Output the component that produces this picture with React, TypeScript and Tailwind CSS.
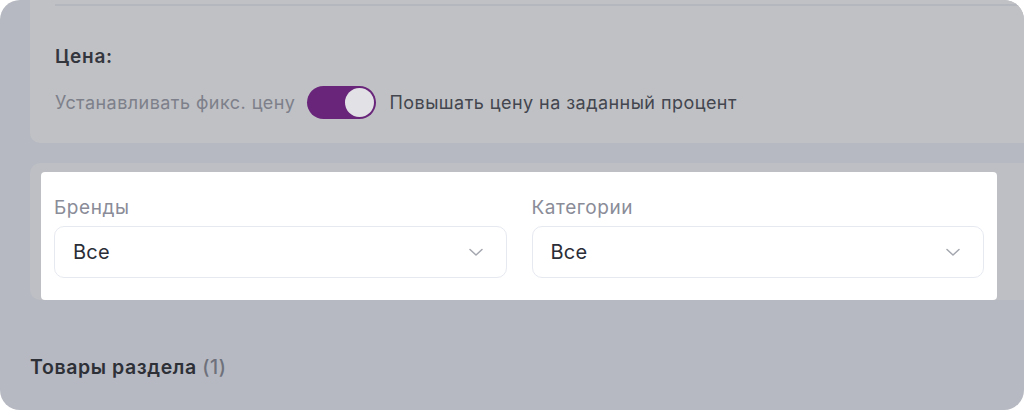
import React from "react";

function Chevron() {
  return (
    <svg width="16" height="16" viewBox="0 0 16 16" fill="none" className="shrink-0">
      <path d="M2 5.5 8 11l6-5.5" stroke="#a3a6ae" strokeWidth="1.5" strokeLinecap="round" strokeLinejoin="round" />
    </svg>
  );
}

function SelectField({ label }: { label: string }) {
  return (
    <div className="flex flex-1 flex-col">
      <div className="h-[24px] text-[19px] leading-[24px] tracking-[0.03em] text-[#8a8c98]">{label}</div>
      <div className="mt-[6px] flex h-[52px] items-center justify-between rounded-[10px] border border-[#e6e9f0] bg-white pl-[18px] pr-[22px]">
        <span className="text-[20px] tracking-[0.01em] text-[#2b2e37]">Все</span>
        <Chevron />
      </div>
    </div>
  );
}

export default function App() {
  return (
    <div className="h-[410px] w-[1024px] bg-white" style={{ fontFamily: "Inter, 'Noto Sans', sans-serif" }}>
      <div className="flex h-full flex-col overflow-hidden rounded-[20px] bg-[#b6b9c1] pl-[30px]">
        {/* price settings card */}
        <div className="mr-[-20px] mt-[-10px] flex h-[153px] shrink-0 flex-col rounded-[10px] bg-[#c0c1c5] pl-[25px]">
          <div className="mt-[14px] h-[2px] bg-[#b4b7bd]" />
          <div className="mt-[39px] text-[19px] font-semibold leading-[24px] tracking-[0.04em] text-[#34363e]">Цена:</div>
          <div className="mt-[17px] flex items-center">
            <span className="text-[18px] tracking-[0.025em] text-[#7d808a]">Устанавливать фикс. цену</span>
            <div className="ml-[12px] flex h-[33px] w-[69px] items-center justify-end rounded-full bg-[#68257a] p-[2px]">
              <div className="h-[29px] w-[29px] rounded-full bg-[#e2e2e6]" />
            </div>
            <span className="ml-[13px] text-[18px] tracking-[0.025em] text-[#43464e]">Повышать цену на заданный процент</span>
          </div>
        </div>

        {/* filters card */}
        <div className="mr-[-20px] mt-[20px] h-[137px] shrink-0 rounded-[10px] bg-[#bdbfc4] pl-[11px] pt-[9px]">
          <div className="flex w-[956px] gap-[25px] rounded-[4px] bg-white px-[13px] pb-[22px] pt-[24px]">
            <SelectField label="Бренды" />
            <SelectField label="Категории" />
          </div>
        </div>

        <div className="mt-[55px] text-[19.5px] font-semibold leading-[24px] tracking-[0.03em] text-[#2e3038]">
          Товары раздела <span className="font-medium text-[#6e717b]">(1)</span>
        </div>
      </div>
    </div>
  );
}
